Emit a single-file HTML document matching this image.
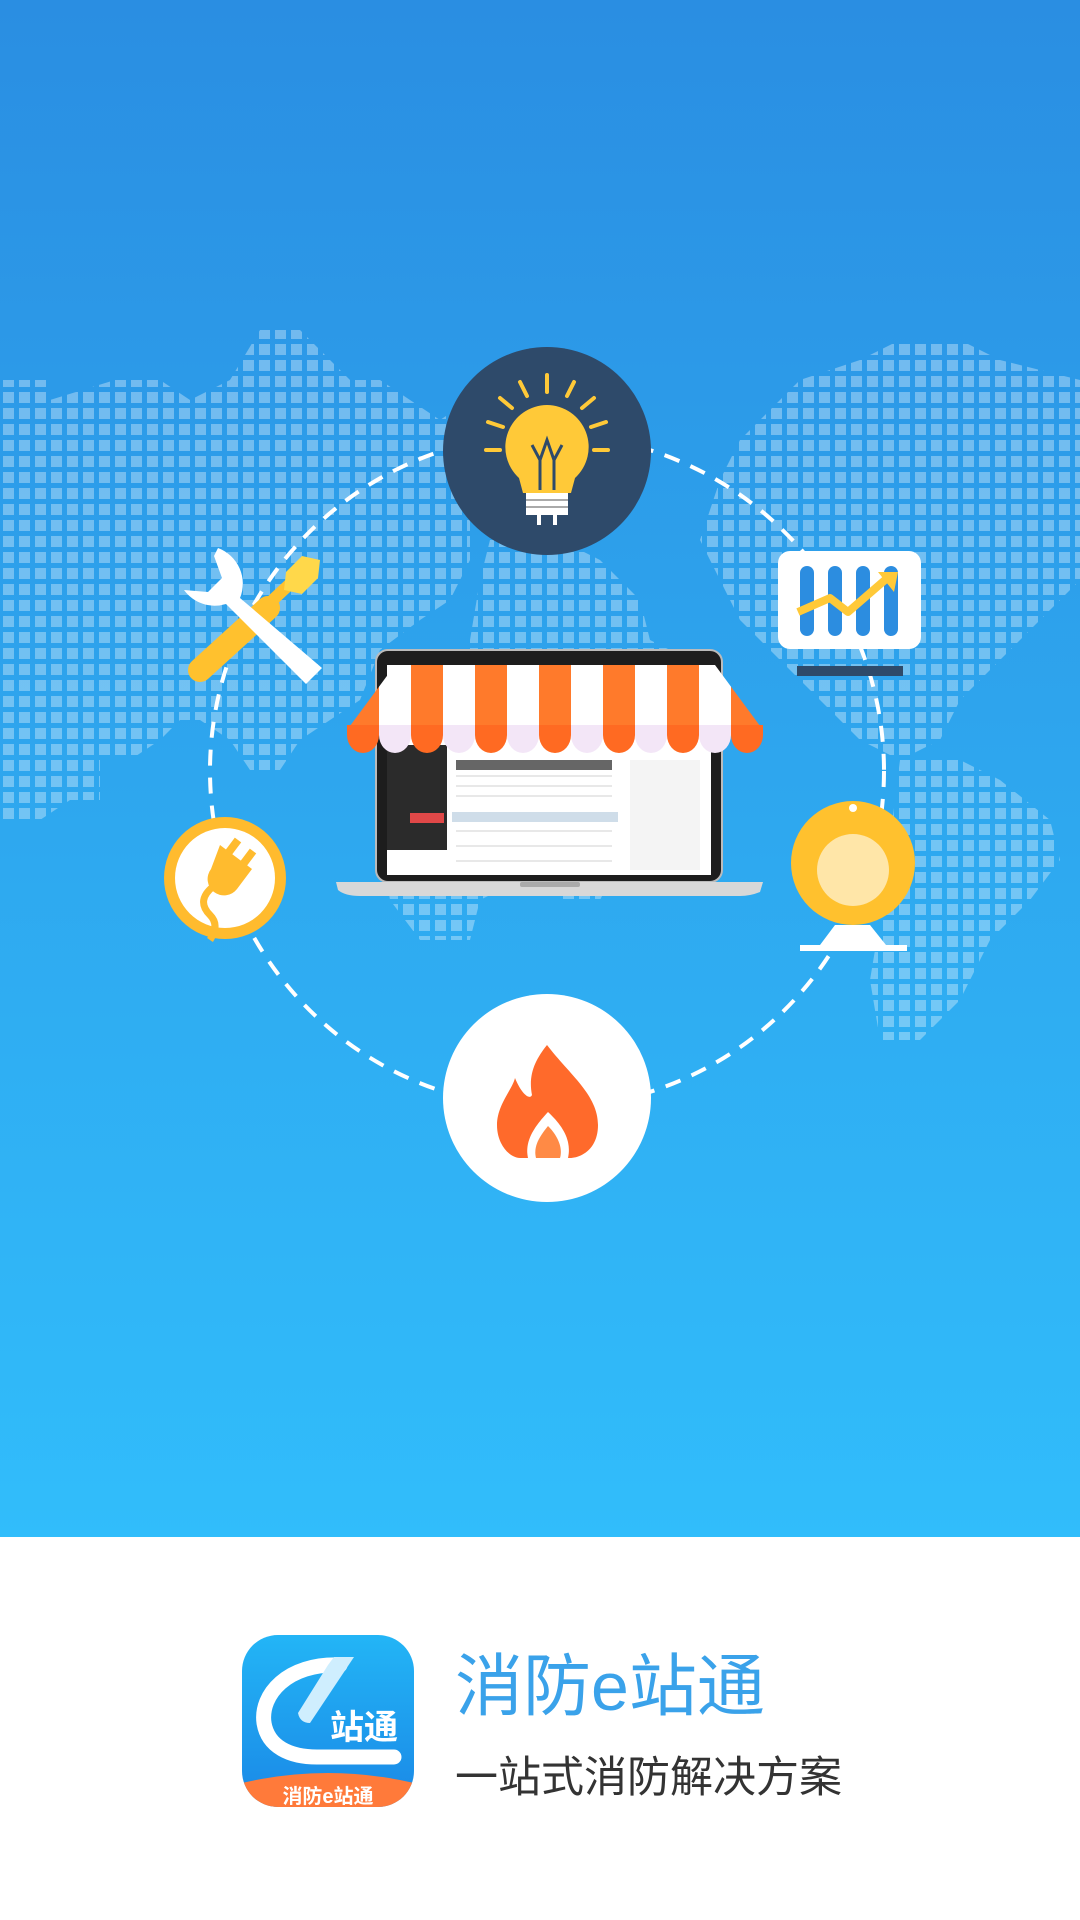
<!DOCTYPE html>
<html><head><meta charset="utf-8"><style>
html,body{margin:0;padding:0;width:1080px;height:1920px;overflow:hidden;background:#fff;font-family:"Liberation Sans","Noto Sans CJK SC",sans-serif}
.top{position:absolute;left:0;top:0;width:1080px;height:1537px;background:linear-gradient(180deg,#2a8ee2 0%,#2ea6ee 50%,#31bdfb 100%)}
</style></head><body>
<div class="top">
<svg width="1080" height="1537" viewBox="0 0 1080 1537" style="position:absolute;left:0;top:0">
<defs>
<pattern id="dots" x="0" y="5" width="16" height="16" patternUnits="userSpaceOnUse"><rect x="3" y="3" width="11" height="11" fill="#fff" fill-opacity="0.33"/></pattern>
<clipPath id="map">
<polygon points="0,380 50,380 50,400 115,380 160,380 190,400 230,380 260,330 300,330 330,360 350,380 380,380 410,400 440,420 470,400 470,560 450,600 420,620 380,650 360,700 330,720 300,740 280,770 250,770 230,740 200,720 180,720 160,740 130,760 100,760 100,800 70,800 40,820 0,820"/>
<polygon points="380,760 460,760 500,800 530,820 560,840 520,880 480,900 470,940 420,940 390,900 380,840"/>
<polygon points="470,470 520,470 520,520 470,520"/>
<polygon points="490,540 560,540 600,560 640,600 650,640 690,660 690,720 660,760 640,800 620,860 600,900 560,900 560,800 520,760 470,760 470,640 480,580"/>
<polygon points="760,420 800,380 860,360 900,340 960,340 1000,360 1040,370 1080,380 1080,580 1040,620 1000,660 960,700 940,740 900,760 860,740 820,700 780,660 740,620 720,580 700,540 720,480 740,440"/>
<polygon points="900,760 960,760 1000,780 1050,820 1060,860 1030,900 990,940 960,1000 920,1040 880,1040 870,980 880,920 890,840"/>
</clipPath>
<pattern id="aw" width="64" height="200" patternUnits="userSpaceOnUse" x="347"><rect width="32" height="200" fill="#ff7a2b"/><rect x="32" width="32" height="200" fill="#fff"/></pattern>
</defs>
<rect x="0" y="300" width="1080" height="760" fill="url(#dots)" clip-path="url(#map)"/>
<circle cx="547" cy="771" r="337" fill="none" stroke="#fff" stroke-width="4" stroke-dasharray="16 12"/>
<!-- laptop -->
<rect x="376" y="650" width="346" height="232" rx="12" fill="#1d1d1d" stroke="#bbb" stroke-width="2"/>
<rect x="387" y="665" width="324" height="210" fill="#fff"/>
<rect x="387" y="745" width="60" height="105" fill="#2b2b2b"/>
<rect x="410" y="813" width="34" height="10" fill="#e04848"/>
<rect x="452" y="812" width="166" height="10" fill="#cfdde9"/>
<rect x="456" y="760" width="156" height="10" fill="#666"/>
<g fill="#e8e8e8"><rect x="456" y="775" width="156" height="2"/><rect x="456" y="785" width="156" height="2"/><rect x="456" y="795" width="156" height="2"/><rect x="456" y="830" width="156" height="2"/><rect x="456" y="845" width="156" height="2"/><rect x="456" y="860" width="156" height="2"/><rect x="630" y="760" width="70" height="110" fill="#f4f4f4"/></g>
<path d="M336,882 L763,882 L760,892 Q750,896 740,896 L360,896 Q345,896 338,890 Z" fill="#d8d8d8"/>
<rect x="520" y="882" width="60" height="5" rx="2" fill="#aaa"/>
<!-- awning -->
<path d="M395,665 L715,665 L763,730 L347,730 Z" fill="url(#aw)"/>
<g>
<path d="M347,725 h32 v10 a16,18 0 0 1 -32,0z" fill="#ff6a22"/>
<path d="M379,725 h32 v10 a16,18 0 0 1 -32,0z" fill="#f3e6f7"/>
<path d="M411,725 h32 v10 a16,18 0 0 1 -32,0z" fill="#ff6a22"/>
<path d="M443,725 h32 v10 a16,18 0 0 1 -32,0z" fill="#f3e6f7"/>
<path d="M475,725 h32 v10 a16,18 0 0 1 -32,0z" fill="#ff6a22"/>
<path d="M507,725 h32 v10 a16,18 0 0 1 -32,0z" fill="#f3e6f7"/>
<path d="M539,725 h32 v10 a16,18 0 0 1 -32,0z" fill="#ff6a22"/>
<path d="M571,725 h32 v10 a16,18 0 0 1 -32,0z" fill="#f3e6f7"/>
<path d="M603,725 h32 v10 a16,18 0 0 1 -32,0z" fill="#ff6a22"/>
<path d="M635,725 h32 v10 a16,18 0 0 1 -32,0z" fill="#f3e6f7"/>
<path d="M667,725 h32 v10 a16,18 0 0 1 -32,0z" fill="#ff6a22"/>
<path d="M699,725 h32 v10 a16,18 0 0 1 -32,0z" fill="#f3e6f7"/>
<path d="M731,725 h32 v10 a16,18 0 0 1 -32,0z" fill="#ff6a22"/>
</g>
<!-- bulb -->
<circle cx="547" cy="451" r="104" fill="#2e4a6a"/>
<g stroke="#ffc938" stroke-width="4" stroke-linecap="round">
<line x1="547" y1="375" x2="547" y2="392"/><line x1="520" y1="382" x2="527" y2="396"/><line x1="574" y1="382" x2="567" y2="396"/><line x1="500" y1="398" x2="512" y2="408"/><line x1="594" y1="398" x2="582" y2="408"/><line x1="488" y1="422" x2="503" y2="427"/><line x1="606" y1="422" x2="591" y2="427"/><line x1="486" y1="450" x2="500" y2="450"/><line x1="608" y1="450" x2="594" y2="450"/></g>
<path d="M547,405 a42,42 0 0 1 28,73 l-4,15 h-48 l-4,-15 a42,42 0 0 1 28,-73z" fill="#ffc938"/>
<path d="M540,490 l0,-30 l-8,-15 M554,490 l0,-30 l8,-15 M540,460 l7,-20 l7,20" stroke="#2e4a6a" stroke-width="3" fill="none"/>
<rect x="526" y="493" width="42" height="22" fill="#fff"/>
<g stroke="#aaa" stroke-width="2"><line x1="526" y1="500" x2="568" y2="500"/><line x1="526" y1="507" x2="568" y2="507"/></g>
<rect x="537" y="515" width="4" height="10" fill="#fff"/><rect x="553" y="515" width="4" height="10" fill="#fff"/>
<!-- fire -->
<circle cx="547" cy="1098" r="104" fill="#fff"/>
<path d="M547,1045 C570,1075 598,1095 598,1125 C598,1150 580,1158 570,1158 L520,1158 C510,1158 497,1145 497,1125 C497,1105 512,1090 515,1078 C522,1095 530,1100 532,1095 C528,1075 535,1060 547,1045Z" fill="#ff6a2b"/>
<path d="M548,1112 C562,1125 572,1140 568,1158 L528,1158 C524,1140 536,1125 548,1112Z" fill="#fff"/>
<path d="M548,1126 C558,1136 563,1148 560,1158 L536,1158 C533,1146 540,1136 548,1126Z" fill="#ff8a45"/>
<!-- plug -->
<circle cx="225" cy="878" r="61" fill="#ffbb2e"/>
<circle cx="225" cy="878" r="50" fill="#fff"/>
<g fill="#ffbb2e"><path d="M220,845 l32,24 l-15,20 a16,16 0 0 1 -26,-20z"/><rect x="228" y="838" width="8" height="20" transform="rotate(37 232 848)"/><rect x="243" y="849" width="8" height="20" transform="rotate(37 247 859)"/></g>
<path d="M215,885 q-20,15 -5,30 q10,10 0,25" stroke="#ffbb2e" stroke-width="7" fill="none"/>
<!-- ball -->
<path d="M820,945 L886,945 L870,925 L835,925Z" fill="#fff"/>
<rect x="800" y="945" width="107" height="6" fill="#fff"/>
<circle cx="853" cy="863" r="62" fill="#ffc12e"/>
<circle cx="853" cy="870" r="36" fill="#ffe6a8"/>
<circle cx="853" cy="808" r="4" fill="#fff"/>
<!-- chart -->
<rect x="778" y="551" width="143" height="98" rx="12" fill="#fff"/>
<g fill="#2c8de0"><rect x="800" y="566" width="14" height="70" rx="7"/><rect x="828" y="566" width="14" height="70" rx="7"/><rect x="856" y="566" width="14" height="70" rx="7"/><rect x="884" y="566" width="14" height="70" rx="7"/></g>
<path d="M798,612 L830,598 L848,612 L885,580" stroke="#ffc938" stroke-width="8" fill="none" stroke-linejoin="round"/>
<path d="M878,572 L898,572 L894,592Z" fill="#ffc938"/>
<rect x="797" y="666" width="106" height="10" fill="#2e4a6a"/>
<!-- tools -->
<path d="M200,670 L268,608" stroke="#ffc12e" stroke-width="24" stroke-linecap="round"/>
<path d="M262,610 L292,582" stroke="#ffc12e" stroke-width="12"/>
<path d="M286,572 L302,556 L320,560 L318,578 L302,594 L284,590Z" fill="#ffd84a"/>
<path d="M218,548 A38,38 0 0 1 240,598 L322,668 L306,684 L226,604 A38,38 0 0 1 184,590 L208,592 L222,578 L214,556Z" fill="#fff"/>
</svg>
</div>
<!-- logo -->
<div style="position:absolute;left:242px;top:1635px;width:172px;height:172px;border-radius:36px;overflow:hidden;background:linear-gradient(180deg,#23b5f6,#1a88e6)">
<svg width="172" height="172" viewBox="0 0 172 172" style="position:absolute;left:0;top:0">
<path d="M98,30 C45,28 18,60 22,88 C26,112 48,122 75,122 L152,122" stroke="#fff" stroke-width="15" fill="none" stroke-linecap="round"/>
<path d="M92,22 L112,22 L104,34 L68,88 Q58,88 56,78 L86,30Z" fill="#cfeefe"/>
<text x="122" y="104" text-anchor="middle" font-size="34" font-weight="bold" fill="#fff" font-family="Noto Sans CJK SC,sans-serif">站通</text>
<path d="M0,148 Q86,128 172,148 L172,172 L0,172Z" fill="#ff7a3a"/>
<text x="86" y="168" text-anchor="middle" font-size="20" font-weight="bold" fill="#fff" font-family="Liberation Sans,Noto Sans CJK SC,sans-serif">消防e站通</text>
</svg>
</div>
<div style="position:absolute;left:455px;top:1642px;font-size:68px;color:#3aa2ea;line-height:90px;white-space:nowrap">消防e站通</div>
<div style="position:absolute;left:455px;top:1748px;font-size:43px;color:#333;line-height:60px;white-space:nowrap">一站式消防解决方案</div>
</body></html>
